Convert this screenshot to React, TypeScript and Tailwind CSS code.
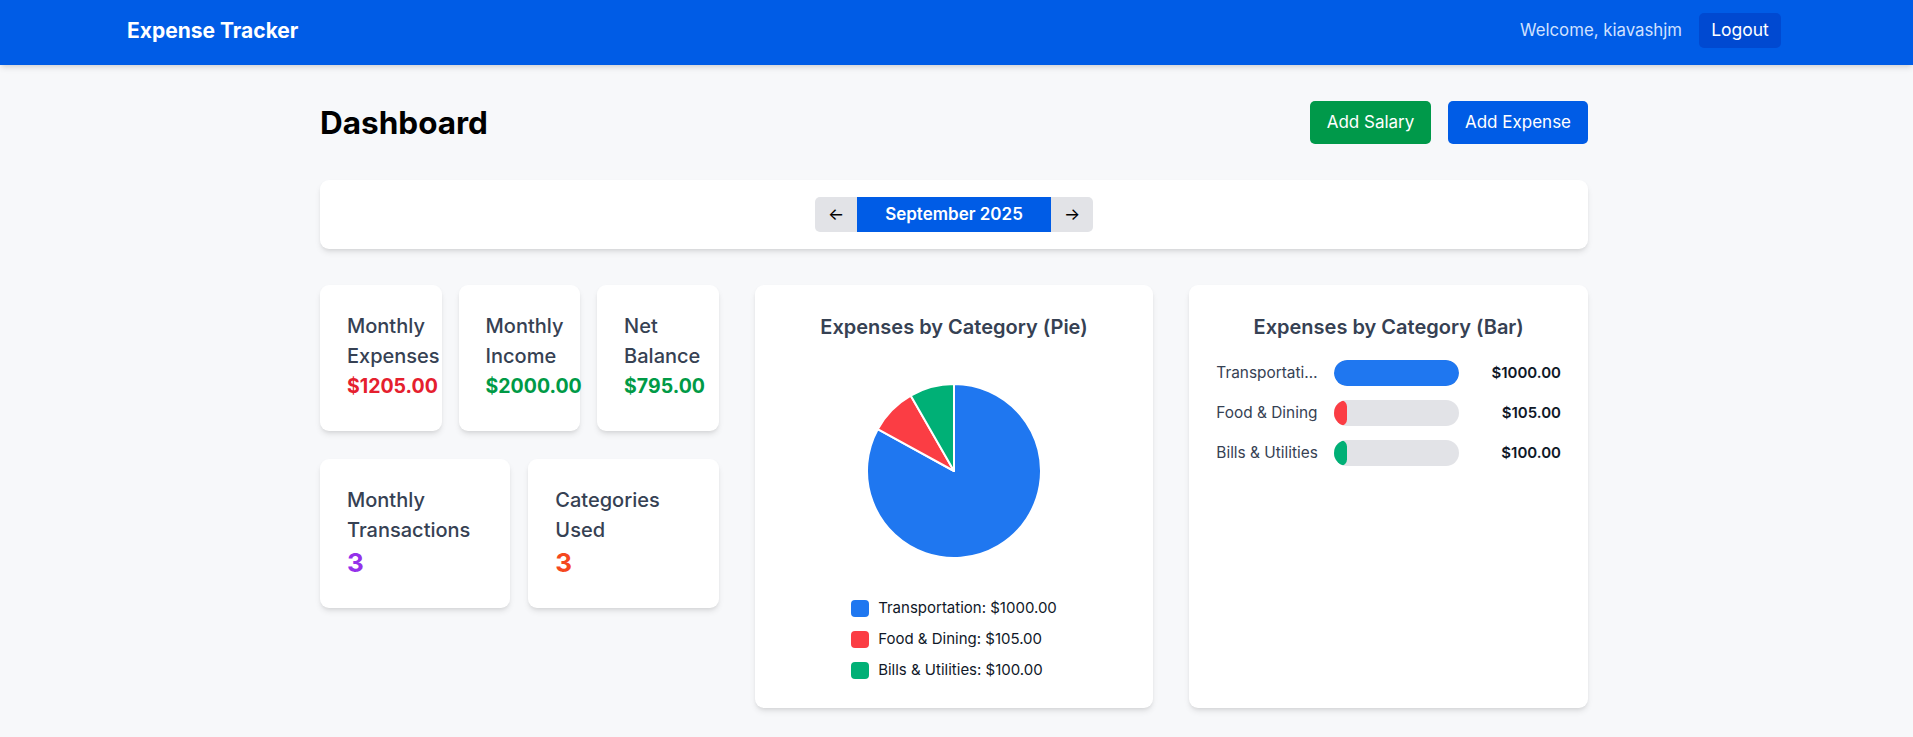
import { useMemo } from 'react';

type Category = {
  name: string;
  amount: number;
  color: string;
  fill: string;
};

const categories: Category[] = [
  { name: 'Transportation', amount: 1000, color: '#1f77f0', fill: 'bg-[#1f77f0]' },
  { name: 'Food & Dining', amount: 105, color: '#fb3d44', fill: 'bg-[#fb3d44]' },
  { name: 'Bills & Utilities', amount: 100, color: '#00b076', fill: 'bg-[#00b076]' },
];

function Header() {
  return (
    <header className="h-[65px] bg-[#005ce6] text-white shadow-md">
      <div className="flex h-[48px] items-end justify-between pl-[127px] pr-[132px]">
        <div className="flex h-[35px] items-center text-[21px] font-bold">Expense Tracker</div>
        <div className="flex items-center gap-[17px]">
          <span className="text-[16.8px] text-[#d0e1ff]">Welcome, kiavashjm</span>
          <button className="h-[35px] w-[82px] rounded-[5px] bg-[#0049d1] text-[17.5px] text-white">
            Logout
          </button>
        </div>
      </div>
    </header>
  );
}

function StatCard({
  label,
  value,
  valueClass,
  big,
}: {
  label: string;
  value: string;
  valueClass: string;
  big?: boolean;
}) {
  return (
    <div
      className={
        big
          ? 'rounded-[9px] bg-white px-[27px] pb-[28px] pt-[26px] shadow-md'
          : 'rounded-[9px] bg-white px-[27px] pb-[30px] pt-[26px] shadow-md'
      }>
      <p className="text-[20px] font-medium leading-[30px] text-gray-700">{label}</p>
      <p
        className={
          big
            ? `text-[26px] font-bold leading-[35px] ${valueClass}`
            : `text-[19.5px] font-bold leading-[30px] ${valueClass}`
        }>
        {value}
      </p>
    </div>
  );
}

function PieChart() {
  const total = categories.reduce((s, c) => s + c.amount, 0);
  const slices = useMemo(() => {
    let start = 0;
    return categories.map(c => {
      const angle = (c.amount / total) * Math.PI * 2;
      const end = start + angle;
      const r = 87;
      const x1 = 100 + r * Math.sin(start);
      const y1 = 100 - r * Math.cos(start);
      const x2 = 100 + r * Math.sin(end);
      const y2 = 100 - r * Math.cos(end);
      const large = angle > Math.PI ? 1 : 0;
      const d = `M100,100 L${x1},${y1} A${r},${r} 0 ${large} 1 ${x2},${y2} Z`;
      start = end;
      return { d, color: c.color };
    });
  }, [total]);

  return (
    <svg width="200" height="200" viewBox="0 0 200 200" className="mx-auto">
      {slices.map(s => (
        <path key={s.color} d={s.d} fill={s.color} stroke="#ffffff" strokeWidth="2" strokeLinejoin="round" />
      ))}
    </svg>
  );
}

export default function App() {
  const max = Math.max(...categories.map(c => c.amount));

  return (
    <div className="min-h-screen bg-[#f7f8fa] font-['Inter','Noto_Sans',sans-serif]">
      <Header />
      <main className="ml-[320px] w-[1268px] pb-10 pt-[36px]">
        <div className="flex items-center justify-between">
          <h1 className="text-[31.5px] font-bold leading-[43px] text-black">Dashboard</h1>
          <div className="flex gap-[17px]">
            <button className="h-[43px] w-[121px] rounded-[5px] bg-[#00994a] text-[17px] text-white">
              Add Salary
            </button>
            <button className="h-[43px] w-[140px] rounded-[5px] bg-[#005ce6] text-[17px] text-white">
              Add Expense
            </button>
          </div>
        </div>

        <div className="mt-[36px] flex h-[69px] items-center justify-center rounded-[9px] bg-white shadow-md">
          <div className="flex h-[35px] overflow-hidden rounded-[5px]">
            <button className="w-[42px] bg-[#e2e3e7] text-[17px] text-black">←</button>
            <div className="flex w-[194px] items-center justify-center bg-[#005ce6] text-[17px] font-semibold text-white">
              September 2025
            </div>
            <button className="w-[42px] bg-[#e2e3e7] text-[17px] text-black">→</button>
          </div>
        </div>

        <div className="mt-[36px] grid grid-cols-3 gap-[36px]">
          <div className="flex flex-col gap-[28px]">
            <div className="grid grid-cols-3 gap-[17px]">
              <StatCard label="Monthly Expenses" value="$1205.00" valueClass="text-[#e5202e]" />
              <StatCard label="Monthly Income" value="$2000.00" valueClass="text-[#009a46]" />
              <StatCard label="Net Balance" value="$795.00" valueClass="text-[#009a46]" />
            </div>
            <div className="grid grid-cols-2 gap-[18px]">
              <StatCard label="Monthly Transactions" value="3" valueClass="text-[#9431ea]" big />
              <StatCard label="Categories Used" value="3" valueClass="text-[#f5481e]" big />
            </div>
          </div>

          <div className="h-[423px] rounded-[9px] bg-white p-[27px] shadow-md">
            <h2 className="text-center text-[20px] font-semibold leading-[30px] text-gray-700">
              Expenses by Category (Pie)
            </h2>
            <div className="mt-[29px]">
              <PieChart />
            </div>
            <div className="mt-[26px] flex justify-center">
              <ul className="flex flex-col gap-[9px]">
                {categories.map(c => (
                  <li key={c.name} className="flex items-center gap-[9px] text-[15px] leading-[22px] text-gray-900">
                    <span className={`h-[17px] w-[18px] rounded-[4px] ${c.fill}`} />
                    {c.name}: ${c.amount.toFixed(2)}
                  </li>
                ))}
              </ul>
            </div>
          </div>

          <div className="h-[423px] rounded-[9px] bg-white p-[27px] shadow-md">
            <h2 className="text-center text-[20px] font-semibold leading-[30px] text-gray-700">
              Expenses by Category (Bar)
            </h2>
            <div className="mt-[18px] flex flex-col gap-[14px]">
              {categories.map(c => (
                <div key={c.name} className="flex items-center gap-[14px]">
                  <span className="w-[104px] truncate text-[15.4px] text-gray-700">{c.name}</span>
                  <div className="h-[26px] flex-1 overflow-hidden rounded-full bg-[#e2e3e7]">
                    <div
                      className={`h-full rounded-full ${c.fill}`}
                      style={{ width: `${(c.amount / max) * 100}%` }}
                    />
                  </div>
                  <span className="w-[88px] text-right text-[15px] font-semibold text-gray-900">
                    ${c.amount.toFixed(2)}
                  </span>
                </div>
              ))}
            </div>
          </div>
        </div>
      </main>
    </div>
  );
}
